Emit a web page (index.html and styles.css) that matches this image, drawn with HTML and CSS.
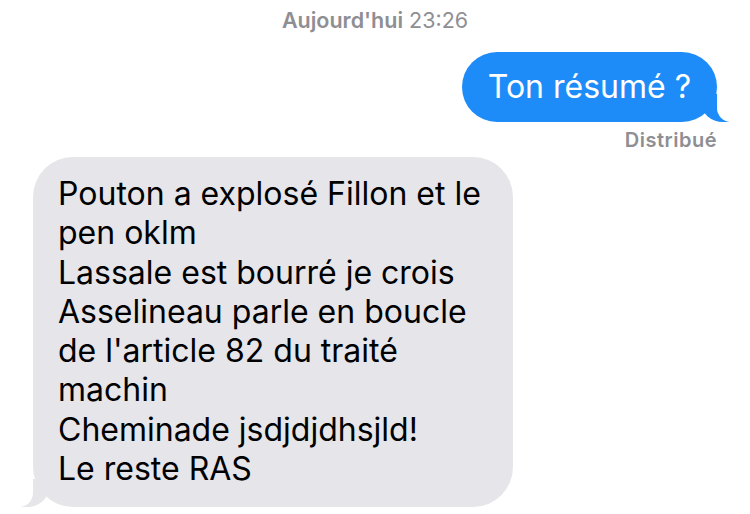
FILE: index.html
```html
<!DOCTYPE html>
<html lang="fr">
  <head>
    <meta charset="UTF-8" />
    <title>Messages</title>
    <link rel="stylesheet" href="styles.css">
  </head>
  <body>
    <div class="thread">
      <div class="timestamp"><b>Aujourd'hui</b> 23:26</div>

      <div class="row row-me">
        <div class="bubble bubble-me">Ton résumé ?</div>
      </div>
      <div class="status">Distribué</div>

      <div class="row row-them">
        <div class="bubble bubble-them">Pouton a explosé Fillon et le<br />pen oklm<br />Lassale est bourré je crois<br />Asselineau parle en boucle<br />de l'article 82 du traité<br />machin<br />Cheminade jsdjdjdhsjld!<br />Le reste RAS</div>
      </div>
    </div>
  </body>
</html>
```

FILE: styles.css
```css
body {
  margin: 0;
  background: #fff;
  font-family: Inter, "Liberation Sans", sans-serif;
  color: #000;
}

.thread {
  display: flex;
  flex-direction: column;
  padding: 7px 33px 0 33px;
}

.timestamp {
  text-align: center;
  font-size: 21.5px;
  line-height: 26px;
  color: #8e8e93;
}

.timestamp b {
  font-weight: 600;
}

.row {
  display: flex;
}

.row-me {
  justify-content: flex-end;
  margin-top: 19px;
}

.row-them {
  justify-content: flex-start;
  margin-top: 5px;
}

.bubble {
  position: relative;
  white-space: nowrap;
}

.bubble-me {
  background: #1e8cf8;
  color: #fff;
  font-size: 32px;
  line-height: 40px;
  padding: 15px 26px 15px 26px;
  border-radius: 36px;
}

.bubble-me::before,
.bubble-them::before {
  content: "";
  position: absolute;
  bottom: 0;
  width: 28px;
  height: 28px;
}

.bubble-me::before {
  right: -12px;
  background: #1e8cf8;
  border-bottom-left-radius: 22px 20px;
}

.bubble-me::after,
.bubble-them::after {
  content: "";
  position: absolute;
  bottom: 0;
  width: 14px;
  height: 28px;
  background: #fff;
}

.bubble-me::after {
  right: -14px;
  border-bottom-left-radius: 14px;
}

.status {
  text-align: right;
  font-size: 20px;
  line-height: 24px;
  font-weight: 600;
  letter-spacing: 0.5px;
  color: #8e8e93;
  margin-top: 6px;
}

.bubble-them {
  background: #e5e5ea;
  font-size: 32px;
  line-height: 39.3px;
  padding: 17px 25px 19px 25px;
  border-radius: 40px;
  width: 480px;
  box-sizing: border-box;
}

.bubble-them::before {
  left: -12px;
  background: #e5e5ea;
  border-bottom-right-radius: 22px 20px;
}

.bubble-them::after {
  left: -14px;
  border-bottom-right-radius: 14px;
}
```
